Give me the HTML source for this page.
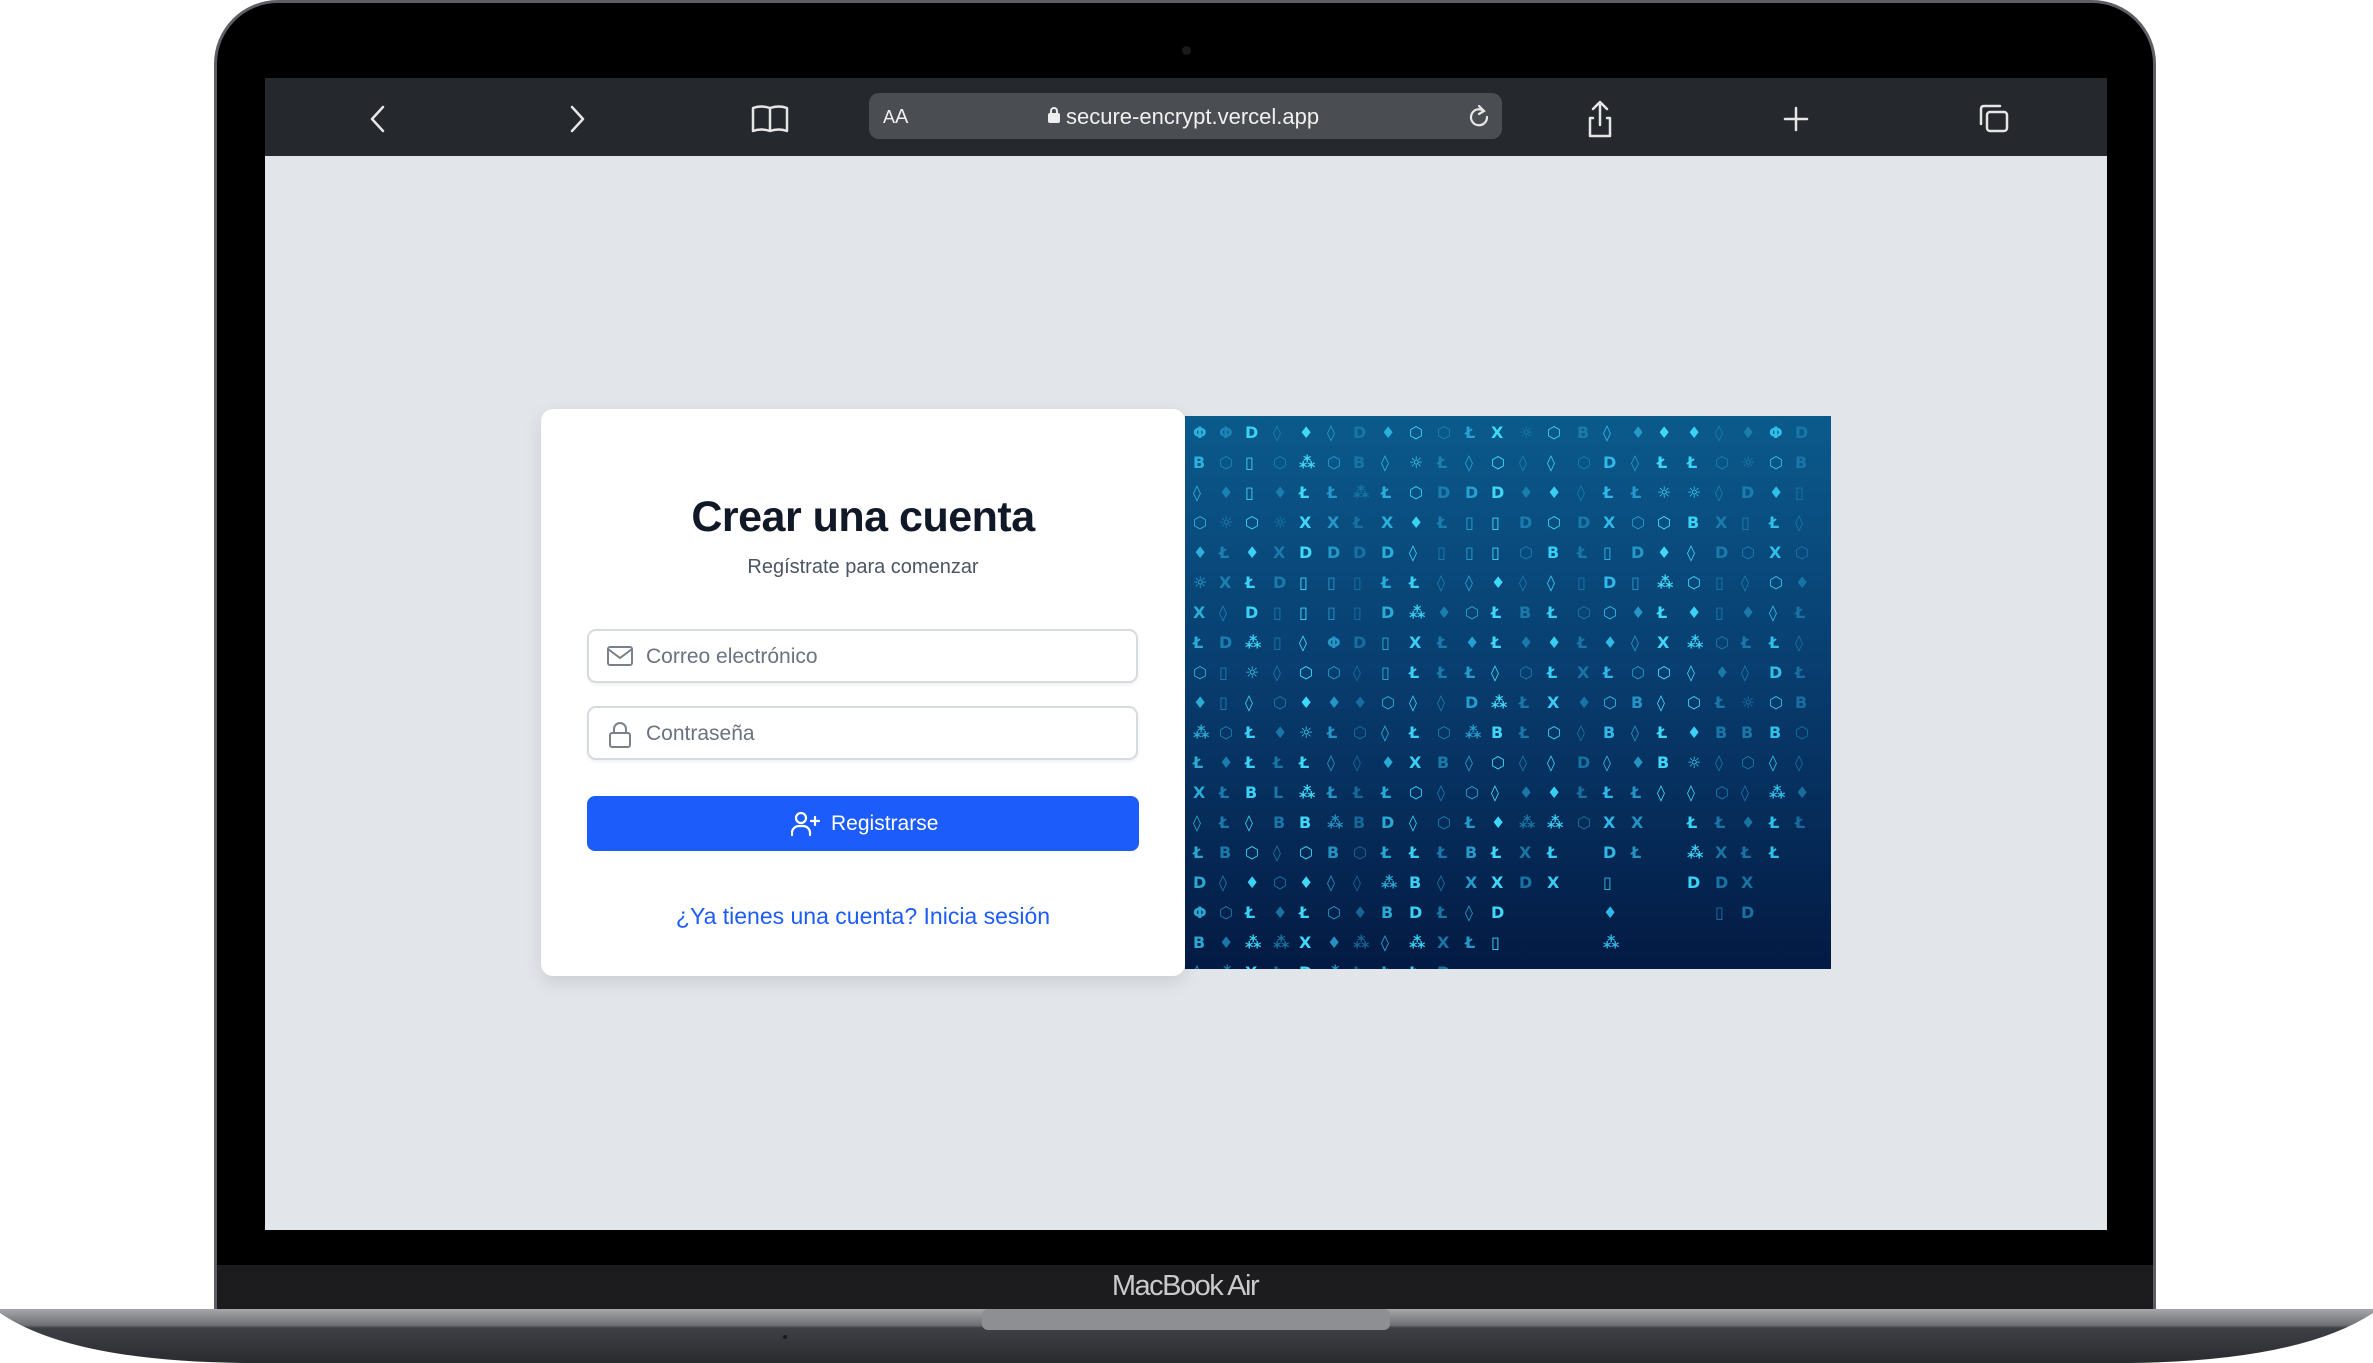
<!DOCTYPE html>
<html><head><meta charset="utf-8"><style>
*{margin:0;padding:0;box-sizing:border-box}
body{width:2373px;height:1363px;background:#fff;position:relative;overflow:hidden;font-family:"Liberation Sans","DejaVu Sans",sans-serif}
.abs{position:absolute}
#lid{left:214px;top:0;width:1942px;height:1312px;background:#000;border-radius:64px 64px 0 0;border:3px solid #5d5f64;border-bottom:none}
#screen{left:265px;top:78px;width:1842px;height:1152px;background:#e2e5ea;overflow:hidden}
#bar{left:0;top:0;width:1842px;height:78px;background:#25292d}
#chin{left:217px;top:1265px;width:1936px;height:45px;background:#1c1c1e}
#url{left:604px;top:15px;width:633px;height:46px;background:#4a4d51;border-radius:10px;color:#f0f0f0}
.card{left:276px;top:331px;width:644px;height:567px;background:#fff;border-radius:12px;box-shadow:0 6px 18px rgba(0,0,0,.10)}
.inp{position:absolute;left:46px;width:551px;height:54px;border:2px solid #d7dae0;border-radius:9px;background:#fff;box-shadow:0 2px 3px rgba(0,0,0,.06)}
.inp span{position:absolute;left:57px;top:14px;font-size:21px;color:#6b7280}
.inp svg{position:absolute;left:18px;top:13px}
#img{left:920px;top:338px;width:646px;height:553px;background:linear-gradient(#0b5a8c,#083e70 45%,#031a43);overflow:hidden}
.col{position:absolute;top:2px;width:1px;font-size:16px;line-height:30px;text-align:left;word-break:break-all;line-break:anywhere;font-weight:bold;font-family:"DejaVu Sans",sans-serif}
</style></head><body>
<div class="abs" id="lid"></div>
<div class="abs" style="left:1182px;top:46px;width:9px;height:9px;border-radius:50%;background:#1a1a1c"></div>
<div class="abs" id="chin"></div>
<div class="abs" style="left:1095px;top:1270px;width:180px;text-align:center;color:#c9c9cc;font-size:29px;letter-spacing:-1.5px">MacBook Air</div>
<svg class="abs" style="left:0;top:1309px" width="2373" height="54">
<defs><linearGradient id="bg" x1="0" y1="0" x2="0" y2="1"><stop offset="0" stop-color="#a5a7ab"/><stop offset=".3" stop-color="#6e7075"/><stop offset=".35" stop-color="#3e4045"/><stop offset="1" stop-color="#2a2b2f"/></linearGradient></defs>
<path d="M0 0 H2373 V4 Q2300 52 2130 54 H243 Q70 52 0 4 Z" fill="url(#bg)"/>
<rect x="982" y="0" width="408" height="21" rx="6" fill="#8d8f93"/>
<circle cx="785" cy="28" r="2" fill="#1a1a1c"/>
</svg>
<div class="abs" id="screen">
 <div class="abs" id="bar">
  <svg class="abs" style="left:0;top:0" width="1842" height="78" fill="none" stroke="#e6e6e6" stroke-width="2.5" stroke-linecap="round" stroke-linejoin="round">
   <path d="M118 29 L107 41 L118 53"/>
   <path d="M307 29 L318 41 L307 53"/>
   <path d="M505 30 Q496 27 488 30 V53 Q496 50 505 53 Q514 50 522 53 V30 Q514 27 505 30 V53"/>
   <path d="M1328 40 H1325 V58 H1345 V40 H1342 M1335 47 V25 M1328 31 L1335 24 L1342 31"/>
   <path d="M1531 30 V52 M1520 41 H1542"/>
   <rect x="1722" y="34" width="20" height="19" rx="3"/>
   <path d="M1716 46 V31 Q1716 28 1719 28 H1735"/>
  </svg>
  <div class="abs" id="url">
   <div class="abs" style="left:14px;top:13px;font-size:18px">A<span style="font-size:20px">A</span></div>
   <svg class="abs" style="left:178px;top:13px" width="14" height="18"><rect x="1" y="7" width="12" height="10" rx="2" fill="#eee"/><path d="M4 8 V5 a3 3 0 0 1 6 0 V8" stroke="#eee" stroke-width="2" fill="none"/></svg>
   <div class="abs" style="left:197px;top:11px;font-size:22px">secure-encrypt.vercel.app</div>
   <svg class="abs" style="left:597px;top:10px" width="26" height="26" fill="none" stroke="#e6e6e6" stroke-width="2.2" stroke-linecap="round"><path d="M18 8 A8 8 0 1 0 21 14"/><path d="M13 3 L18 8 L13 11"/></svg>
  </div>
 </div>
 <div class="abs card">
  <div class="abs" style="left:0;top:84px;width:644px;text-align:center;font-size:43px;font-weight:bold;color:#111827;letter-spacing:-.5px">Crear una cuenta</div>
  <div class="abs" style="left:0;top:147px;width:644px;text-align:center;font-size:20px;color:#4b5563">Regístrate para comenzar</div>
  <div class="inp" style="top:220px"><svg width="26" height="24" fill="none" stroke="#7b818c" stroke-width="2"><rect x="1" y="3" width="24" height="18" rx="2"/><path d="M1 5 L13 14 L25 5"/></svg><span>Correo electrónico</span></div>
  <div class="inp" style="top:297px"><svg width="26" height="28" fill="none" stroke="#7b818c" stroke-width="2"><rect x="3" y="12" width="20" height="14" rx="2"/><path d="M7 12 V8 a6 6 0 0 1 12 0 V12"/></svg><span>Contraseña</span></div>
  <div class="abs" style="left:46px;top:387px;width:552px;height:55px;background:#1c5cfb;border-radius:8px"></div>
  <svg class="abs" style="left:250px;top:402px" width="30" height="26" fill="none" stroke="#fff" stroke-width="2.2" stroke-linecap="round"><circle cx="10" cy="7" r="5"/><path d="M1 24 V21 a7 7 0 0 1 7-6 h4 a7 7 0 0 1 7 6 V24"/><path d="M24 6 V14 M20 10 H28"/></svg>
  <div class="abs" style="left:290px;top:403px;font-size:21px;color:#fff">Registrarse</div>
  <div class="abs" style="left:0;top:494px;width:644px;text-align:center;font-size:23px;color:#1c5cfb">¿Ya tienes una cuenta? Inicia sesión</div>
 </div>
 <div class="abs" id="img">
  <div class="col" style="left:8px;color:#36c8f0;opacity:.8">ΦB◊⬡♦☼XŁ⬡♦⁂ŁX◊ŁDΦB◊⬡♦☼</div>
  <div class="col" style="left:34px;color:#1f8fc0;opacity:.8">Φ⬡♦☼ŁX◊D▯▯⬡♦ŁŁB◊⬡♦⁂ŁX</div>
  <div class="col" style="left:60px;color:#3ad2f5">D▯▯⬡♦ŁD⁂☼◊ŁŁB◊⬡♦Ł⁂X◊DŁ</div>
  <div class="col" style="left:88px;color:#1e88b8;opacity:.8">◊⬡♦☼XD▯▯◊⬡♦ŁLB◊⬡♦⁂ŁXD</div>
  <div class="col" style="left:114px;color:#40d8f8">♦⁂ŁXD▯▯◊⬡♦☼Ł⁂B⬡♦ŁXD◊Ł</div>
  <div class="col" style="left:142px;color:#2aa6d6;opacity:.85">◊⬡ŁXD▯▯Φ⬡♦Ł◊Ł⁂B◊⬡♦⁂ŁXD</div>
  <div class="col" style="left:168px;color:#1d82b4;opacity:.7">DB⁂ŁD▯▯D◊♦⬡◊ŁB⬡◊♦⁂ŁD</div>
  <div class="col" style="left:196px;color:#2fc0ea;opacity:.85">♦◊ŁXDŁD▯▯⬡◊♦ŁDŁ⁂B◊Ł</div>
  <div class="col" style="left:224px;color:#3ad0f4">⬡☼⬡♦◊Ł⁂XŁ◊ŁX⬡◊ŁBD⁂Ł</div>
  <div class="col" style="left:252px;color:#1f8cbc;opacity:.8">⬡ŁDŁ▯◊♦ŁŁ◊⬡B◊⬡Ł◊ŁXD</div>
  <div class="col" style="left:280px;color:#2ab0e0;opacity:.85">Ł◊D▯▯◊⬡♦ŁD⁂◊⬡ŁBX◊Ł</div>
  <div class="col" style="left:306px;color:#40d8f8">X⬡D▯▯♦ŁŁ◊⁂B⬡◊♦ŁXD▯</div>
  <div class="col" style="left:334px;color:#1e88b8;opacity:.8">☼◊♦D⬡◊B♦⬡ŁŁ◊♦⁂XD</div>
  <div class="col" style="left:362px;color:#38cef4">⬡◊♦⬡B◊Ł♦ŁX⬡◊♦⁂ŁX</div>
  <div class="col" style="left:392px;color:#1f8cbc;opacity:.7">B⬡◊DŁ▯⬡ŁX♦◊DŁ⬡</div>
  <div class="col" style="left:418px;color:#2fb8e8">◊DŁX▯D⬡♦Ł⬡B◊ŁXD▯♦⁂</div>
  <div class="col" style="left:446px;color:#2aa6d6;opacity:.85">♦◊Ł⬡D▯♦◊⬡B◊♦ŁXŁ</div>
  <div class="col" style="left:472px;color:#40d8f8">♦Ł☼⬡♦⁂ŁX⬡◊ŁB◊</div>
  <div class="col" style="left:502px;color:#3ad2f5">♦Ł☼B◊⬡♦⁂◊⬡♦☼◊Ł⁂D</div>
  <div class="col" style="left:530px;color:#1e88b8;opacity:.8">◊⬡◊XD▯▯⬡♦ŁB◊⬡ŁXD▯</div>
  <div class="col" style="left:556px;color:#1f8cbc;opacity:.75">♦☼D▯⬡◊♦Ł◊☼B⬡◊♦ŁXD</div>
  <div class="col" style="left:584px;color:#2fc0ea">Φ⬡♦ŁX⬡◊ŁD⬡B◊⁂ŁŁ</div>
  <div class="col" style="left:610px;color:#1d82b4;opacity:.75">DB▯◊⬡♦Ł◊ŁB⬡◊♦Ł</div>
 </div>
</div>
</body></html>
